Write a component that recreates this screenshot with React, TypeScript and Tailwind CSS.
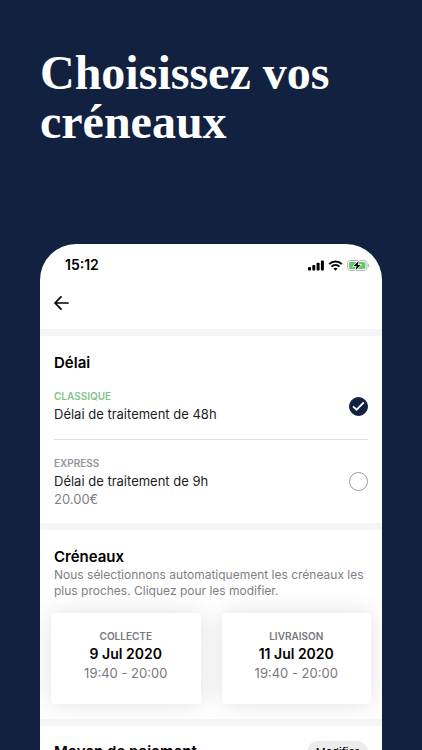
import React, { useState } from "react";

function StatusIcons() {
  return (
    <div className="flex items-center gap-1" aria-hidden="true">
      <svg className="h-[11px] w-4" viewBox="0 0 16 11" fill="#000">
        <rect x="0" y="7" width="3" height="3.5" rx="0.9" />
        <rect x="4.3" y="5" width="3" height="5.5" rx="0.9" />
        <rect x="8.6" y="2.7" width="3" height="7.8" rx="0.9" />
        <rect x="12.9" y="0.5" width="3" height="10" rx="0.9" />
      </svg>
      <svg className="h-[11px] w-[15px]" viewBox="0 0 15 11" fill="none" stroke="#000" strokeWidth="2">
        <path d="M1.2 4.1C4.8 0.5 10.2 0.5 13.8 4.1" />
        <path d="M3.5 6.6C5.8 4.4 9.2 4.4 11.5 6.6" />
        <path d="M7.5 10.8L5.4 8.6C6.6 7.6 8.4 7.6 9.6 8.6Z" fill="#000" stroke="none" />
      </svg>
      <svg className="h-[11px] w-[23px]" viewBox="0 0 23 11">
        <rect x="0.5" y="0.5" width="19.5" height="10" rx="3" fill="#fff" stroke="#b4b6b5" />
        <rect x="2" y="2" width="16.5" height="7" rx="1.6" fill="#67c769" />
        <path d="M21.2 3.8C22.6 4.2 22.6 6.8 21.2 7.2Z" fill="#a0a0a0" />
        <path d="M11.6 1.1L6.7 6.1H9.6L8.7 9.9L13.6 4.9H10.7Z" fill="#000" stroke="#fff" strokeWidth="1.4" paintOrder="stroke" />
      </svg>
    </div>
  );
}

type DelayProps = {
  id: string;
  name: string;
  label: string;
  price?: string;
  nameClass: string;
  checked: boolean;
  onSelect: () => void;
};

function DelayOption({ id, name, label, price, nameClass, checked, onSelect }: DelayProps) {
  return (
    <label htmlFor={id} className="flex cursor-pointer items-center justify-between">
      <span className="flex flex-col">
        <span className={`text-[10px] leading-4 font-semibold uppercase ${nameClass}`}>{name}</span>
        <span className="text-[13px] leading-5 text-[#1c1c1e]">{label}</span>
        {price && <span className="text-[13px] leading-4 text-[#808186]">{price}</span>}
      </span>
      <span className="grid shrink-0 place-items-center">
        <input
          id={id}
          type="radio"
          name="delai"
          checked={checked}
          onChange={onSelect}
          className="col-start-1 row-start-1 size-[19px] appearance-none rounded-full border border-[#9b9ca4] bg-white checked:border-[#12213f] checked:bg-[#12213f]"
        />
        {checked && (
          <svg className="pointer-events-none col-start-1 row-start-1 size-[19px]" viewBox="0 0 19 19" fill="none" stroke="#fff" strokeWidth="1.8" aria-hidden="true">
            <path d="M4 9.3L7.6 12.7L14.8 5.3" />
          </svg>
        )}
      </span>
    </label>
  );
}

function SlotCard({ title, date, time }: { title: string; date: string; time: string }) {
  return (
    <button type="button" className="flex flex-1 flex-col items-center rounded bg-white pt-[15px] pb-[22px] shadow-[0_0_24px_rgba(0,0,0,0.12)]">
      <span className="text-[10px] leading-4 font-semibold text-[#77787e] uppercase">{title}</span>
      <span className="text-sm leading-5 font-semibold text-black">{date}</span>
      <span className="text-[13px] leading-[18px] text-[#77787e]">{time}</span>
    </button>
  );
}

export default function App() {
  const [delay, setDelay] = useState("classique");

  return (
    <div className="flex h-screen flex-col overflow-hidden bg-[#12213f] px-10 font-['Inter','Liberation_Sans',sans-serif]">
      <h1 className="shrink-0 pt-12 font-['Liberation_Serif',serif] text-5xl leading-[49px] font-bold text-white">
        Choisissez vos
        <br />
        créneaux
      </h1>

      <main className="mt-[98px] shrink-0 overflow-hidden rounded-t-[36px] bg-white">
        <header className="h-[85px]">
          <div className="flex items-center justify-between pt-[11px] pr-3 pl-[25px]">
            <span className="text-sm leading-5 font-semibold text-black">15:12</span>
            <StatusIcons />
          </div>
          <button type="button" aria-label="Retour" className="mt-5 ml-[14px] block">
            <svg className="h-4 w-[15px]" viewBox="0 0 15 16" fill="none" stroke="#000" strokeWidth="1.7" strokeLinecap="round" strokeLinejoin="round">
              <path d="M14 8H1M7 1.8L1 8L7 14.2" />
            </svg>
          </button>
        </header>

        <section className="border-t-[7px] border-[#f5f5f5] pt-[17px] pb-4 px-[14px]">
          <h2 className="text-[15px] leading-5 font-semibold text-black">Délai</h2>
          <div className="py-[15px]">
            <DelayOption
              id="classique"
              name="Classique"
              label="Délai de traitement de 48h"
              nameClass="text-[#82c38b]"
              checked={delay === "classique"}
              onSelect={() => setDelay("classique")}
            />
          </div>
          <div className="border-t border-[#e1e2e4] pt-[15px]">
            <DelayOption
              id="express"
              name="Express"
              label="Délai de traitement de 9h"
              price="20.00€"
              nameClass="text-[#92949b]"
              checked={delay === "express"}
              onSelect={() => setDelay("express")}
            />
          </div>
        </section>

        <section className="overflow-hidden border-t-[7px] border-[#f5f5f5] pt-[17px] pb-[15px]">
          <div className="px-[14px]">
            <h2 className="text-[15px] leading-5 font-semibold text-black">Créneaux</h2>
            <p className="text-xs leading-4 text-[#808186]">
              Nous sélectionnons automatiquement les créneaux les plus proches. Cliquez pour les modifier.
            </p>
          </div>
          <div className="mt-[14px] flex gap-[21px] px-[11px]">
            <SlotCard title="Collecte" date="9 Jul 2020" time="19:40 - 20:00" />
            <SlotCard title="Livraison" date="11 Jul 2020" time="19:40 - 20:00" />
          </div>
        </section>

        <section className="flex items-center justify-between border-t-[7px] border-[#f5f5f5] px-[14px] py-[15px]">
          <h2 className="text-[15px] leading-[22px] font-semibold text-black">Moyen de paiement</h2>
          <button type="button" className="rounded-full bg-[#ececed] px-[9px] text-[11px] leading-[22px] text-black">
            Modifier
          </button>
        </section>
      </main>
    </div>
  );
}
